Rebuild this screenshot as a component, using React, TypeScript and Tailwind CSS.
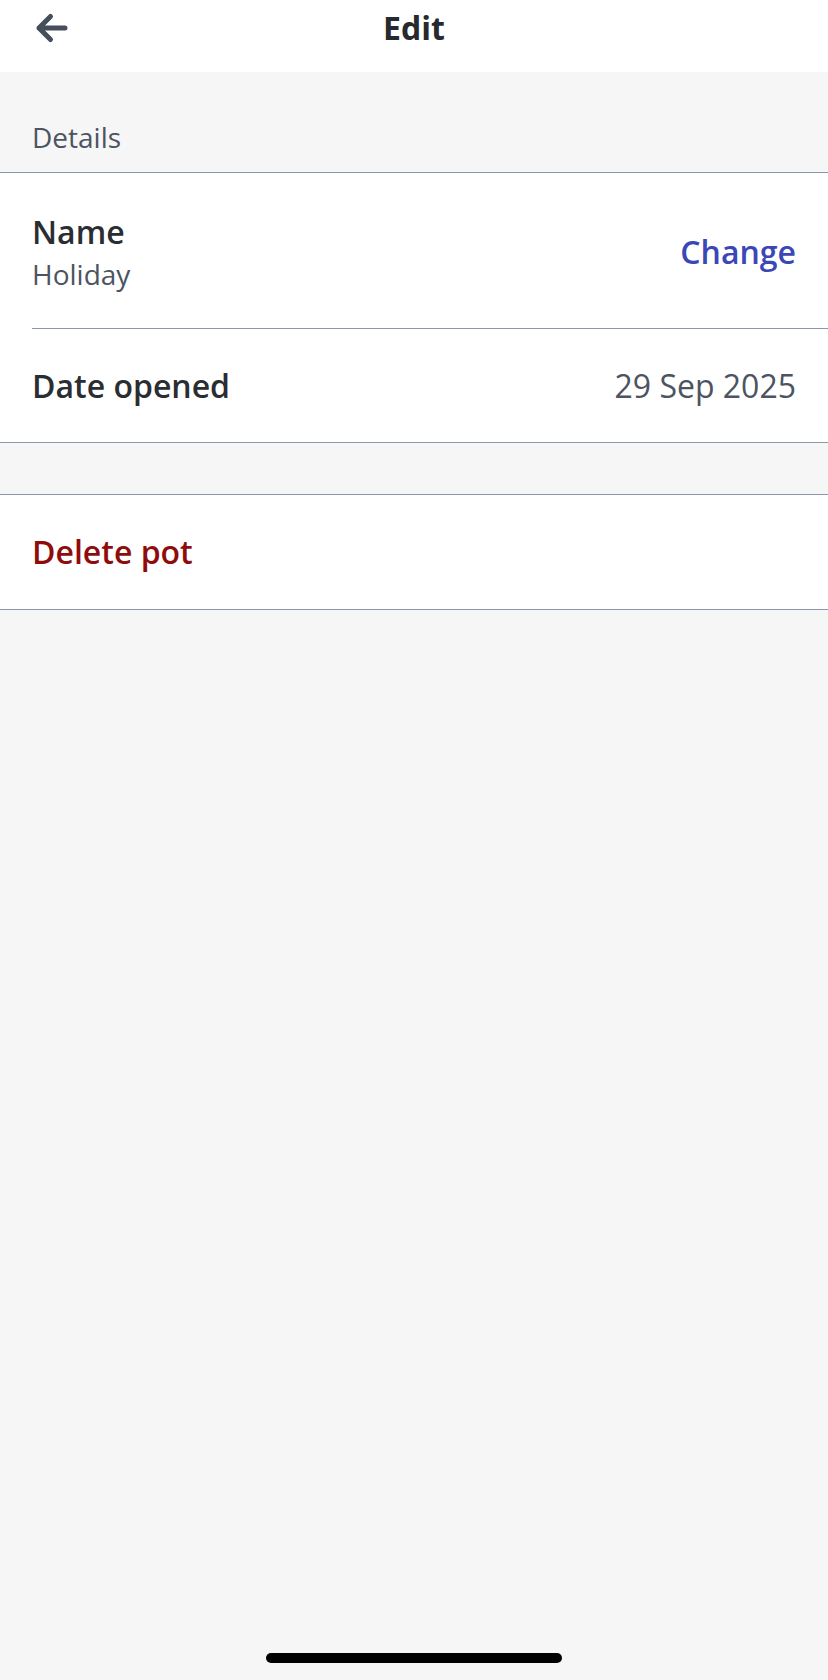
const font = { fontFamily: '"Open Sans", "Noto Sans", sans-serif' };

function BackArrow() {
  return (
    <svg width="36" height="34" viewBox="0 0 36 34" fill="none" aria-hidden="true">
      <path
        d="M5 17H31M16.5 5.5L5 17L16.5 28.5"
        stroke="#454e5a"
        strokeWidth="5"
        strokeLinecap="round"
        strokeLinejoin="round"
      />
    </svg>
  );
}

export default function App() {
  return (
    <div className="min-h-[1680px] w-full bg-[#f6f6f6] flex flex-col" style={font}>
      {/* top bar */}
      <header className="h-[72px] bg-white">
        <div className="relative h-[56px] flex items-center justify-center">
          <button className="absolute left-[34px] top-[11px]">
            <BackArrow />
          </button>
          <h1 className="text-[32px] leading-[40px] font-bold text-[#26292d]">Edit</h1>
        </div>
      </header>

      {/* section title */}
      <div className="pt-[47px] pb-[17px] px-[32px]">
        <span className="text-[28px] leading-[36px] text-[#4c5461]">Details</span>
      </div>

      <div className="bg-white border-t border-b border-[#8c97a9]">
        <div className="flex items-center justify-between pl-[32px] pr-[32px] pt-[39px] pb-[36px]">
          <div className="flex flex-col gap-[4px]">
            <span className="text-[32px] leading-[40px] font-semibold text-[#2a2d31]">Name</span>
            <span className="text-[28px] leading-[36px] text-[#4c5461]">Holiday</span>
          </div>
          <button className="text-[32px] leading-[40px] font-semibold text-[#3b46b7]">Change</button>
        </div>
        <div className="ml-[32px] h-px bg-[#8c97a9]" />
        <div className="h-[113px] flex items-center justify-between pl-[32px] pr-[32px]">
          <span className="text-[32px] leading-[40px] font-semibold text-[#2a2d31]">Date opened</span>
          <span className="text-[32px] leading-[40px] text-[#4c5461]">29 Sep 2025</span>
        </div>
      </div>

      <div className="h-[51px]" />

      <div className="bg-white border-t border-b border-[#8c97a9]">
        <div className="h-[114px] flex items-center pl-[32px]">
          <button className="text-[32px] leading-[40px] font-semibold text-[#8e0c0c]">Delete pot</button>
        </div>
      </div>

      <div className="flex-1" />

      {/* home indicator */}
      <div className="flex justify-center pb-[17px]">
        <div className="w-[296px] h-[10px] rounded-full bg-black" />
      </div>
    </div>
  );
}
